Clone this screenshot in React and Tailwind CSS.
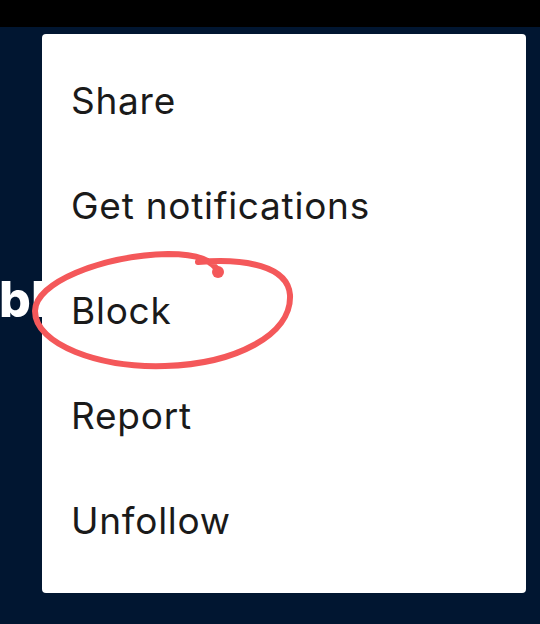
import React from "react";

const items = ["Share", "Get notifications", "Block", "Report", "Unfollow"];

export default function App() {
  return (
    <div className="relative w-[540px] h-[624px] overflow-hidden bg-[#011631]" style={{ fontFamily: "Inter, 'Liberation Sans', sans-serif" }}>
      <div className="h-[27px] bg-black" />
      <div className="pt-[247px]">
        <div className="text-[50px] font-extrabold leading-none text-white -ml-[1px] whitespace-nowrap">bl</div>
      </div>

      <div className="absolute left-[42px] top-[34px] w-[484px] h-[559px] rounded-[4px] bg-white pt-[14px]">
        {items.map((it) => (
          <div key={it} className="h-[105px] flex items-center pl-[29px] text-[37px] tracking-[0.02em] text-[#1a1a1a] leading-none">
            {it}
          </div>
        ))}
      </div>

      <svg className="absolute left-0 top-0 pointer-events-none" width="540" height="624" viewBox="0 0 540 624">
        <path
          d="M 219 272 C 212 261, 200 254, 168 254 C 100 256, 35 283, 35 311 C 35 345, 100 368, 165 366 C 235 364, 292 335, 290 295 C 288 266, 245 258, 198 262"
          fill="none"
          stroke="#f4585a"
          strokeWidth="6"
          strokeLinecap="round"
        />
        <circle cx="218" cy="272" r="6" fill="#f4585a" />
      </svg>
    </div>
  );
}
